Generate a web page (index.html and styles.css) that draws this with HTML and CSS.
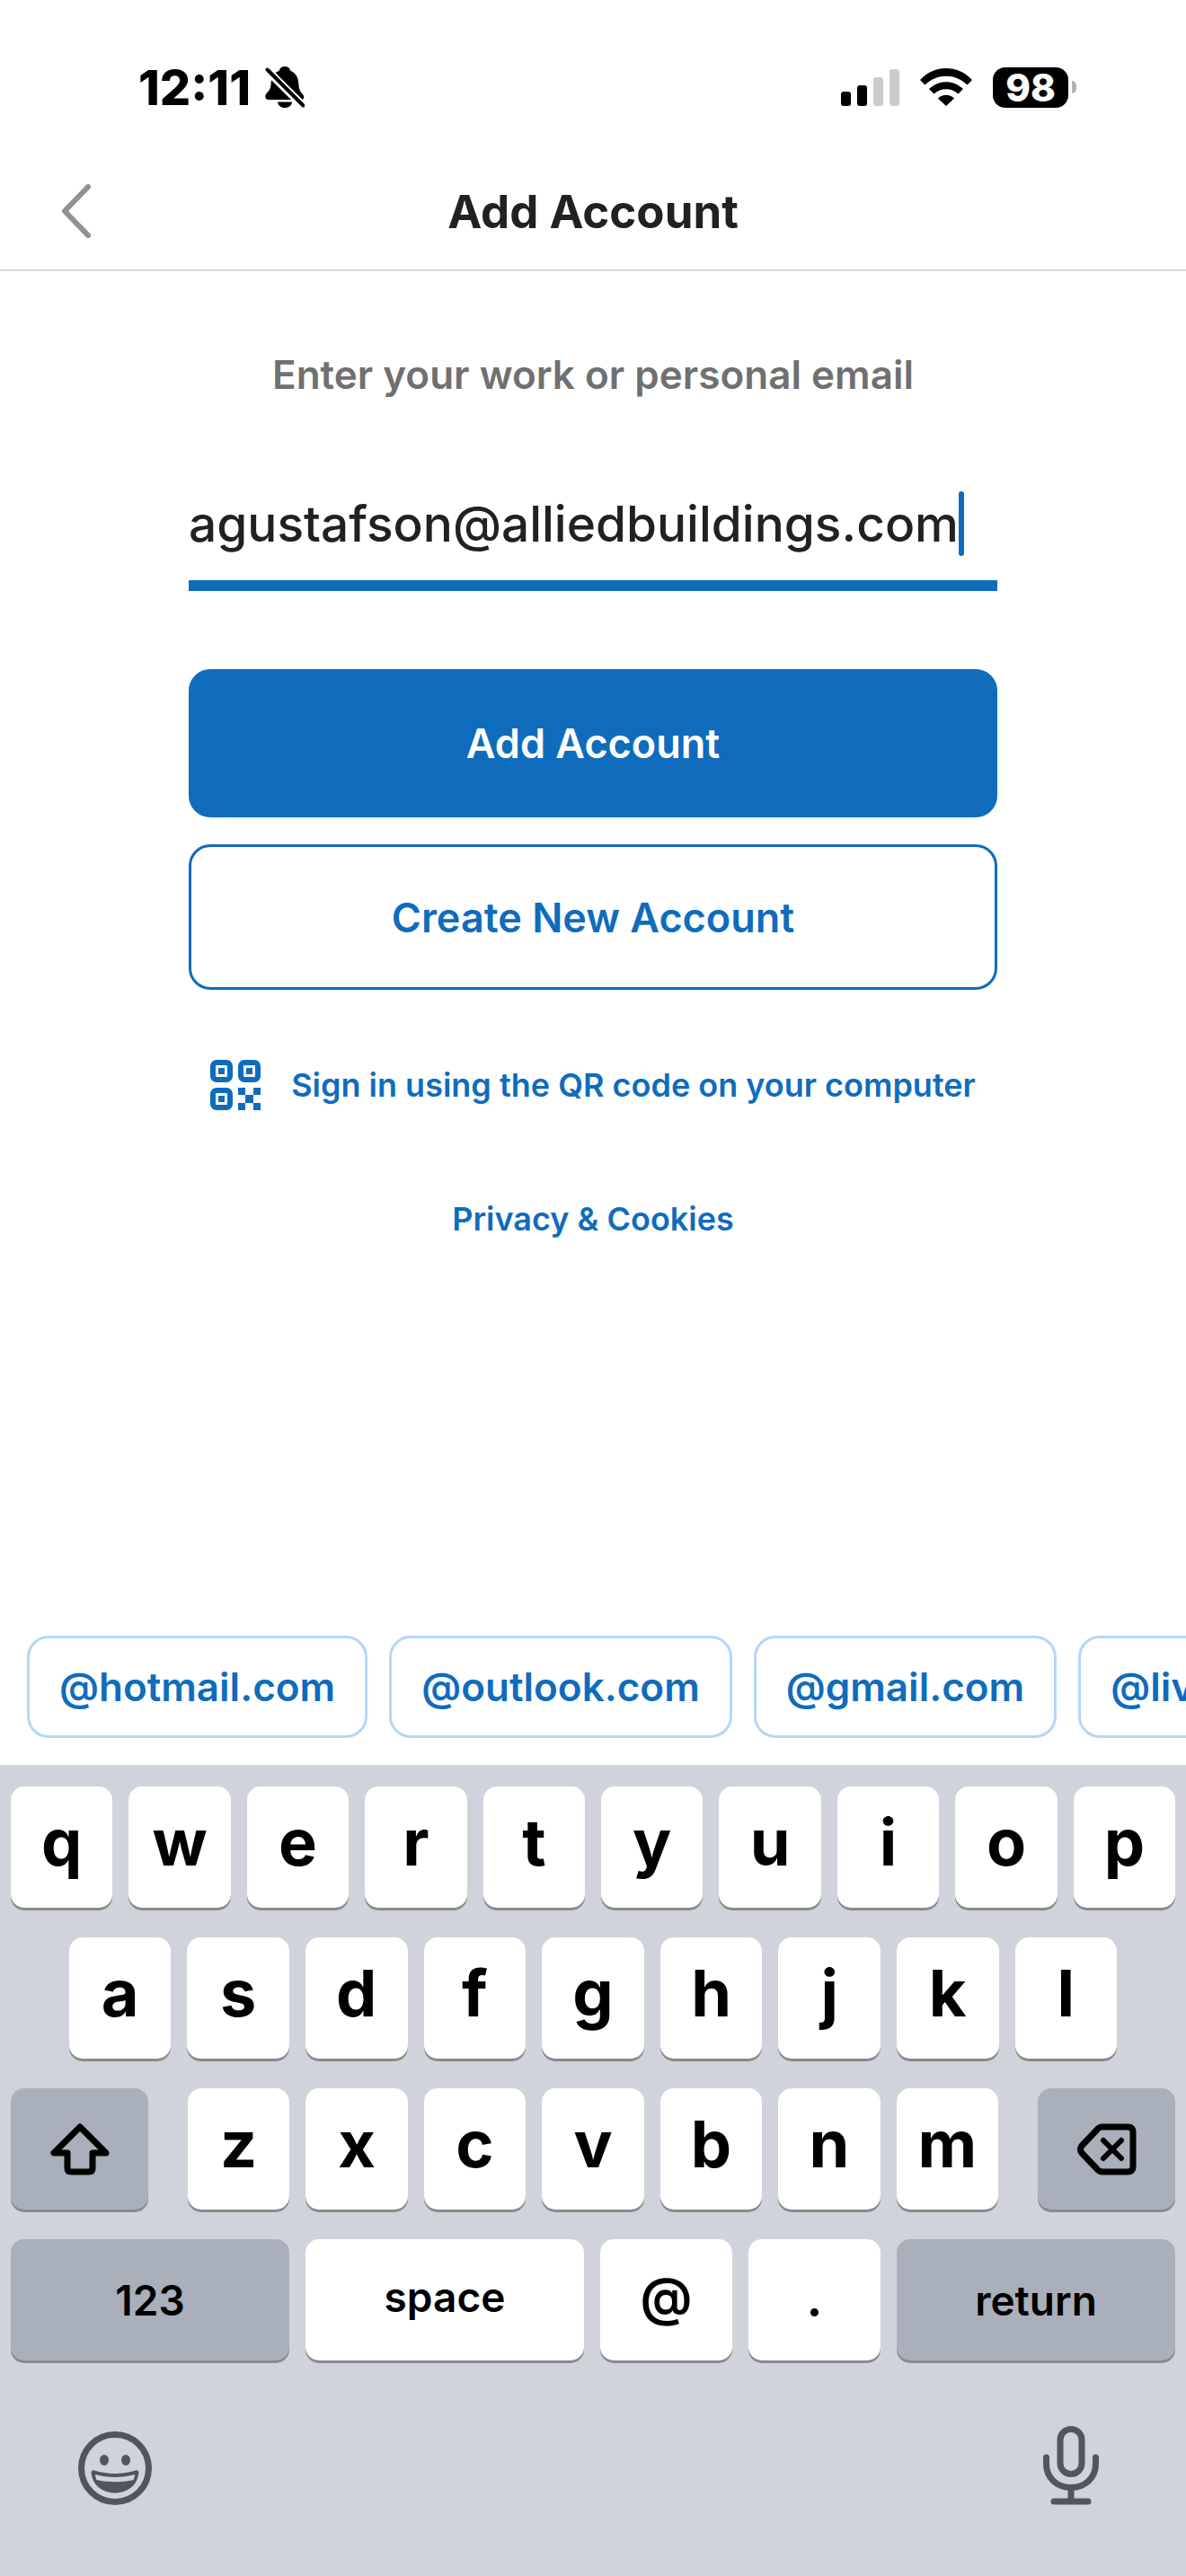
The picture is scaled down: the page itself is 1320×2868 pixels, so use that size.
FILE: index.html
```html
<!DOCTYPE html>
<html lang="en">
<head>
    <meta charset="UTF-8">
    <meta name="viewport" content="width=device-width, initial-scale=1.0">
    <title>Add Account</title>
    <link rel="stylesheet" href="styles.css">
</head>
<body>

<div class="status-bar">
    <div class="status-left">
        <span class="time">12:11</span>
        <svg class="bell" viewBox="0 0 44 46" width="44" height="46" aria-hidden="true">
            <path d="M22 0c3.500 0 5.500 2 6.300 4.700C34 7 37 12 37.300 19c.3 6 1.700 9 4.200 11.500 2.200 2.200 2.500 6.500-1 6.500H4c-4.500 0-4.500-5-2-7.500C5 26.500 6.500 24 6.700 18 7 11.500 10 7 15.700 4.700 16.500 2 18.500 0 22 0z"/>
            <path d="M14 39.500h16c-.5 4-3.500 6.500-8 6.500s-7.500-2.500-8-6.500z"/>
            <path d="M2 4l40.500 40" stroke="#fff" stroke-width="9"/>
            <path d="M2.500 3.500l40 40" stroke="#000" stroke-width="4" stroke-linecap="round"/>
        </svg>
    </div>
    <div class="status-right">
        <svg viewBox="0 0 65 41" width="65" height="41" aria-hidden="true">
            <rect x="0" y="25" width="11" height="16" rx="3"/>
            <rect x="18" y="18" width="11" height="23" rx="3"/>
            <rect x="36" y="9" width="11" height="32" rx="3" fill="#ccc"/>
            <rect x="54" y="0" width="11" height="41" rx="3" fill="#ccc"/>
        </svg>
        <svg viewBox="0 0 58 42" width="58" height="42" aria-hidden="true">
            <path d="M0 13C16-4.300 42-4.300 58 13l-5.500 5.500C39 5.500 19 5.500 5.500 18.500z"/>
            <path d="M10 23c11-10.500 27-10.500 38 0l-5.500 5.500c-8-7-19-7-27 0z"/>
            <path d="M20 33.500c5-5 13-5 18 0L29 42z"/>
        </svg>
        <div class="battery">
            <span class="battery-level">98</span>
            <span class="battery-tip"></span>
        </div>
    </div>
</div>

<header class="nav-bar">
    <button type="button" class="back" aria-label="Back">
        <svg viewBox="0 0 32 60" width="32" height="60" fill="none" stroke="#919191" stroke-width="6" stroke-linecap="round" stroke-linejoin="round">
            <path d="M29 3L3 30l26 27"/>
        </svg>
    </button>
    <h1>Add Account</h1>
</header>

<main>
    <form class="account-form">
        <label for="email">Enter your work or personal email</label>
        <div class="field">
            <input type="email" id="email" value="agustafson@alliedbuildings.com">
            <span class="caret"></span>
        </div>
        <button type="button" class="btn btn-primary">Add Account</button>
        <button type="button" class="btn btn-outline">Create New Account</button>
    </form>

    <a href="#" class="qr-link">
        <svg viewBox="0 0 56 56" width="56" height="56" fill="none" aria-hidden="true">
            <g stroke="currentColor" stroke-width="6">
                <rect x="3" y="3" width="19" height="19" rx="4"/>
                <rect x="34" y="3" width="19" height="19" rx="4"/>
                <rect x="3" y="34" width="19" height="19" rx="4"/>
            </g>
            <path fill="currentColor" d="M9 9h7v7H9zM40 9h7v7h-7zM9 40h7v7H9zM31 31h8v8h-8zM48 31h8v8h-8zM39 39h9v9h-9zM31 48h8v8h-8zM48 48h8v8h-8z"/>
        </svg>
        <span>Sign in using the QR code on your computer</span>
    </a>

    <a href="#" class="privacy-link">Privacy &amp; Cookies</a>
</main>

<div class="suggestions">
    <button type="button">@hotmail.com</button>
    <button type="button">@outlook.com</button>
    <button type="button">@gmail.com</button>
    <button type="button">@live.com</button>
</div>

<div class="keyboard">
    <div class="row">
        <button type="button" class="key">q</button>
        <button type="button" class="key">w</button>
        <button type="button" class="key">e</button>
        <button type="button" class="key">r</button>
        <button type="button" class="key">t</button>
        <button type="button" class="key">y</button>
        <button type="button" class="key">u</button>
        <button type="button" class="key">i</button>
        <button type="button" class="key">o</button>
        <button type="button" class="key">p</button>
    </div>
    <div class="row row-indent">
        <button type="button" class="key">a</button>
        <button type="button" class="key">s</button>
        <button type="button" class="key">d</button>
        <button type="button" class="key">f</button>
        <button type="button" class="key">g</button>
        <button type="button" class="key">h</button>
        <button type="button" class="key">j</button>
        <button type="button" class="key">k</button>
        <button type="button" class="key">l</button>
    </div>
    <div class="row row-shift">
        <button type="button" class="key key-dark" aria-label="Shift">
            <svg viewBox="0 0 66 58" width="66" height="58" fill="none" stroke="#000" stroke-width="7" stroke-linejoin="round">
                <path d="M33 4L4 33h15v17q0 4 4 4h20q4 0 4-4V33h15z"/>
            </svg>
        </button>
        <div class="row">
            <button type="button" class="key">z</button>
            <button type="button" class="key">x</button>
            <button type="button" class="key">c</button>
            <button type="button" class="key">v</button>
            <button type="button" class="key">b</button>
            <button type="button" class="key">n</button>
            <button type="button" class="key">m</button>
        </div>
        <button type="button" class="key key-dark" aria-label="Delete">
            <svg viewBox="0 0 66 58" width="66" height="58" fill="none" stroke="#000" stroke-width="7" stroke-linecap="round" stroke-linejoin="round">
                <path d="M28 4h28q6 0 6 6v38q0 6-6 6H28q-3 0-5-2L5 33q-3-4 0-8L23 6q2-2 5-2z"/>
                <path d="M29 19l20 20M49 19L29 39" stroke-width="6"/>
            </svg>
        </button>
    </div>
    <div class="row">
        <button type="button" class="key key-wide key-dark">123</button>
        <button type="button" class="key key-wide key-space">space</button>
        <button type="button" class="key key-symbol">@</button>
        <button type="button" class="key key-symbol">.</button>
        <button type="button" class="key key-wide key-dark">return</button>
    </div>
    <div class="keyboard-footer">
        <button type="button" aria-label="Emoji">
            <svg viewBox="0 0 82 82" width="82" height="82" fill="#50555e">
                <circle cx="41" cy="41" r="37.500" fill="none" stroke="#50555e" stroke-width="7"/>
                <ellipse cx="29" cy="32" rx="5" ry="6"/>
                <ellipse cx="53" cy="32" rx="5" ry="6"/>
                <path d="M14.500 46c0-2 1.500-3 3.500-2.500 15 4.500 31 4.500 46 0 2-.5 3.500.5 3.500 2.500C66 60 55 68.500 41 68.500S16 60 14.500 46z"/>
                <path d="M19 48c14 4 30 4 44 0-.2 2.500-.7 4-1.500 6-13 3-28 3-41 0-.8-2-1.300-3.500-1.500-6z" fill="#d0d3db"/>
            </svg>
        </button>
        <button type="button" aria-label="Dictate">
            <svg viewBox="0 0 62 88" width="62" height="88" fill="none" stroke="#50555e" stroke-width="7" stroke-linecap="round">
                <rect x="19" y="3.500" width="24" height="50" rx="12"/>
                <path d="M3.500 35v7c0 16 12 26.500 27.500 26.500S58.500 58 58.500 42v-7M31 69v14M12 84h38"/>
            </svg>
        </button>
    </div>
</div>

</body>
</html>
```
FILE: styles.css
```css
* {
    box-sizing: border-box;
}
body {
    margin: 0;
    min-height: 100vh;
    display: flex;
    flex-direction: column;
    font-family: Inter, "Liberation Sans", sans-serif;
    background-color: #fff;
    color: #212121;
    overflow-x: hidden;
}
button {
    font-family: inherit;
    border: none;
    padding: 0;
    background: none;
    cursor: pointer;
}
svg {
    display: block;
    flex-shrink: 0;
}
a {
    color: #0f6cbd;
    text-decoration: none;
    font-size: 36px;
    font-weight: 600;
}

/* Status bar */
.status-bar {
    display: flex;
    justify-content: space-between;
    align-items: center;
    height: 170px;
    padding: 24px 122px 0 154px;
    color: #000;
}
.status-left {
    display: flex;
    align-items: center;
    gap: 16px;
}
.time {
    font-size: 54px;
    font-weight: 800;
}
.status-right {
    display: flex;
    align-items: center;
    gap: 23px;
}
.battery {
    display: flex;
    align-items: center;
    gap: 4px;
}
.battery-level {
    width: 84px;
    height: 45px;
    border-radius: 14px;
    background-color: #000;
    color: #fff;
    font-size: 42px;
    font-weight: 800;
    line-height: 45px;
    text-align: center;
}
.battery-tip {
    width: 5px;
    height: 14px;
    border-radius: 0 5px 5px 0;
    background-color: #b3b3b3;
}

/* Title bar */
.nav-bar {
    display: grid;
    grid-template-columns: 1fr auto 1fr;
    align-items: center;
    height: 132px;
    padding: 0 69px;
    border-bottom: 2px solid #d9d9d9;
}
.back {
    justify-self: start;
}
h1 {
    margin: 0;
    font-size: 51px;
    font-weight: 700;
}

/* Form */
main {
    flex: 1;
    display: flex;
    flex-direction: column;
    align-items: center;
    padding: 88px 210px 0;
}
.account-form {
    width: 100%;
    display: flex;
    flex-direction: column;
}
label {
    font-size: 44px;
    font-weight: 600;
    line-height: 54px;
    text-align: center;
    color: #707070;
}
.field {
    display: flex;
    align-items: center;
    height: 150px;
    margin: 64px 0 87px;
    padding-top: 12px;
    border-bottom: 12px solid #0f6cbd;
}
.field input {
    field-sizing: content;
    min-width: 0;
    padding: 0;
    border: none;
    outline: none;
    font-family: inherit;
    font-size: 55px;
    font-weight: 500;
    color: #212121;
}
.caret {
    width: 6px;
    height: 72px;
    border-radius: 3px;
    background-color: #0f6cbd;
}
.btn {
    height: 165px;
    border-radius: 24px;
    font-size: 45px;
    font-weight: 600;
}
.btn-primary {
    background-color: #0f6cbd;
    color: #fff;
}
.btn-outline {
    height: 162px;
    margin-top: 30px;
    border: 3px solid #0f6cbd;
    color: #0f6cbd;
}
.qr-link {
    display: flex;
    align-items: center;
    gap: 34px;
    margin-top: 78px;
    white-space: nowrap;
}
.privacy-link {
    margin-top: 99px;
}

/* Domain suggestions */
.suggestions {
    display: flex;
    gap: 24px;
    padding: 30px;
    overflow: hidden;
}
.suggestions button {
    flex-shrink: 0;
    height: 114px;
    padding: 0 33px;
    border: 3px solid #b4d6fa;
    border-radius: 24px;
    font-size: 44px;
    font-weight: 600;
    color: #0f6cbd;
}

/* Keyboard */
.keyboard {
    display: flex;
    flex-direction: column;
    gap: 33px;
    padding: 24px 12px 79px;
    background-color: #d0d3db;
}
.row {
    display: flex;
    gap: 18px;
}
.row-indent {
    padding: 0 5%;
}
.row-shift {
    display: grid;
    grid-template-columns: 153fr 902fr 153fr;
    gap: 44px;
}
.key {
    display: flex;
    justify-content: center;
    align-items: center;
    flex: 1 1 0;
    min-width: 0;
    height: 135px;
    padding-bottom: 12px;
    border-radius: 15px;
    background-color: #fff;
    box-shadow: 0 3px 0 #898a8d;
    font-size: 72px;
    font-weight: 700;
    color: #000;
}
.key-dark {
    padding-bottom: 0;
    background-color: #a9afbb;
}
.key-wide {
    flex-grow: 310;
    font-size: 46px;
    font-weight: 600;
}
.key-space {
    padding-bottom: 8px;
}
.key-symbol {
    flex-grow: 147;
    padding-bottom: 8px;
    font-size: 58px;
    font-weight: 600;
}
.keyboard-footer {
    display: flex;
    justify-content: space-between;
    align-items: flex-end;
    padding: 40px 85px 0 75px;
}
```
